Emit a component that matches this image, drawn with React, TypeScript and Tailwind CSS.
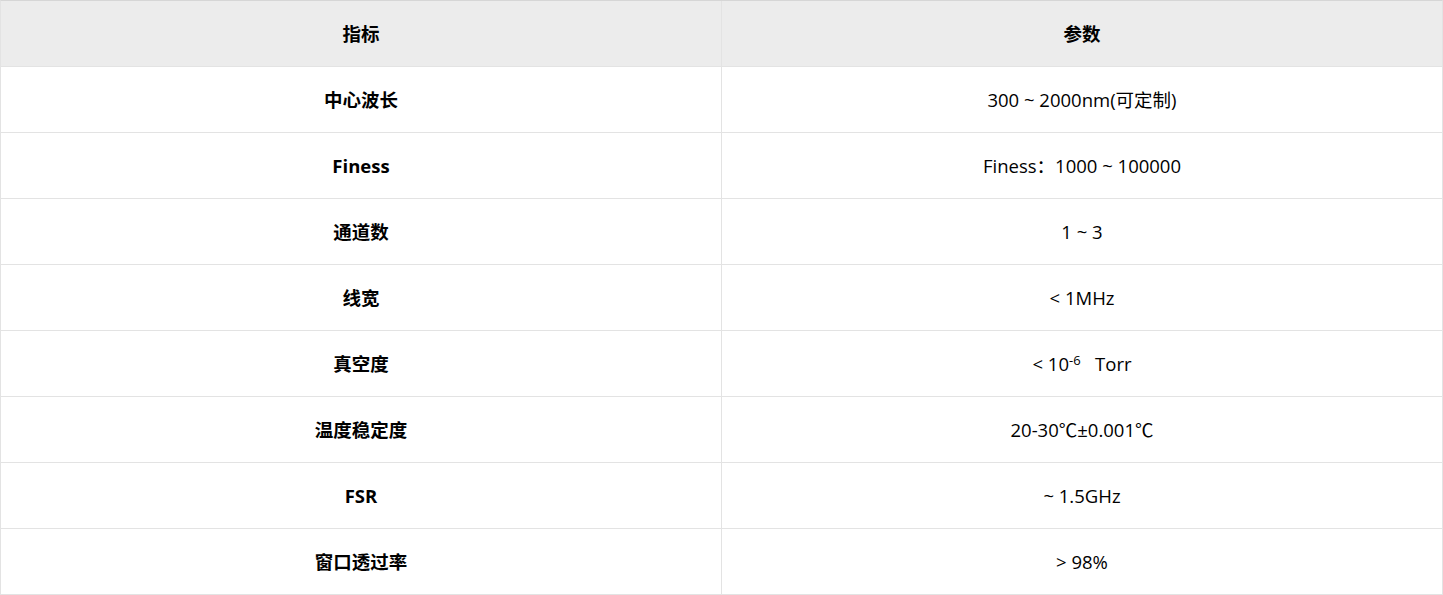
import React from 'react';

interface SpecRow {
  label: string;
  value: React.ReactNode;
}

const rows: SpecRow[] = [
  { label: '中心波长', value: '300 ~ 2000nm(可定制)' },
  { label: 'Finess', value: 'Finess：1000 ~ 100000' },
  { label: '通道数', value: '1 ~ 3' },
  { label: '线宽', value: '< 1MHz' },
  {
    label: '真空度',
    value: (
      <>
        &lt; 10<sup className="text-[13px] relative -top-[4px]">-6</sup>
        {'\u00a0\u00a0\u00a0'}Torr
      </>
    ),
  },
  { label: '温度稳定度', value: '20-30℃±0.001℃' },
  { label: 'FSR', value: '~ 1.5GHz' },
  { label: '窗口透过率', value: '> 98%' },
];

const font = { fontFamily: '"Open Sans", "Noto Sans CJK SC", sans-serif' };

export default function App() {
  return (
    <div className="w-[1443px] bg-white text-[18.5px] text-black" style={font}>
      <div className="border-t border-[#d6d6d6] border-l border-l-[#e3e3e3] border-r border-r-[#e3e3e3]">
        {/* Header */}
        <div className="grid grid-cols-[721px_1fr] h-[66px] bg-[#ececec] border-b border-[#e3e3e3]">
          <div className="flex items-center justify-center font-bold border-r border-[#e3e3e3]">指标</div>
          <div className="flex items-center justify-center font-bold">参数</div>
        </div>

        {rows.map((row) => (
          <div key={row.label} className="grid grid-cols-[721px_1fr] h-[66px] border-b border-[#e3e3e3]">
            <div className="flex items-center justify-center font-bold border-r border-[#e3e3e3]">{row.label}</div>
            <div className="flex items-center justify-center">{row.value}</div>
          </div>
        ))}
      </div>
    </div>
  );
}
